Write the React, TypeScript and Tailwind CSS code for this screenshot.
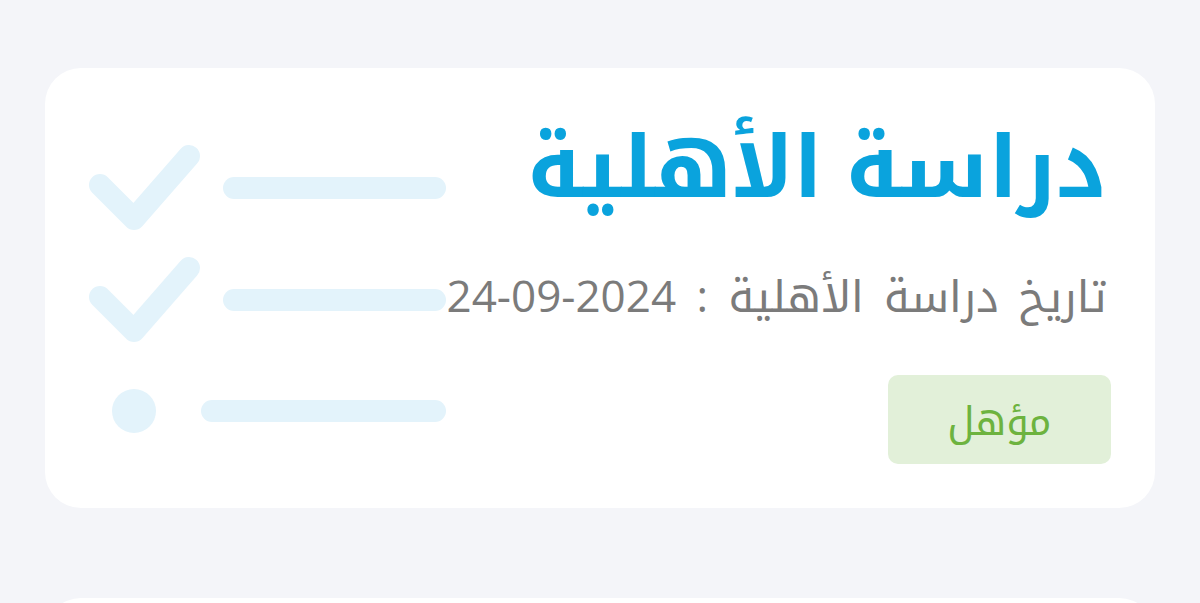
import React from "react"

const arabicFont = {
  fontFamily: '"Open Sans", "Noto Kufi Arabic", "Noto Sans Arabic", "DejaVu Sans", sans-serif',
}

function ChecklistArt() {
  return (
    <svg
      className="absolute left-0 top-0 pointer-events-none"
      width="420"
      height="400"
      viewBox="0 0 420 400"
      fill="none"
    >
      <g stroke="#e3f3fb" strokeWidth="22" strokeLinecap="round" strokeLinejoin="round">
        <path d="M55 117 L89 151 L144 88" />
        <path d="M55 229 L89 263 L144 200" />
        <line x1="189" y1="120" x2="390" y2="120" />
        <line x1="189" y1="232" x2="390" y2="232" />
        <line x1="167" y1="343" x2="390" y2="343" />
      </g>
      <circle cx="89" cy="343" r="22" fill="#e3f3fb" />
    </svg>
  )
}

function EligibilityCard() {
  return (
    <div className="relative h-[440px] rounded-[36px] bg-white overflow-hidden">
      <ChecklistArt />
      <div dir="rtl" className="relative flex flex-col items-start pr-[48px] pt-[36px]" style={arabicFont}>
        <h1 className="text-[86px] leading-[120px] font-bold text-[#0aa3dd]">دراسة الأهلية</h1>
        <p className="mt-[41px] text-[44px] leading-[60px] text-[#7b7b7b] [word-spacing:9px]">
          تاريخ دراسة الأهلية : <span dir="ltr">24-09-2024</span>
        </p>
        <div className="mt-[50px] -mr-[4px] flex h-[89px] w-[223px] items-center justify-center rounded-[10px] bg-[#e2f0d9]">
          <span className="text-[40px] text-[#6db33f]">مؤهل</span>
        </div>
      </div>
    </div>
  )
}

export default function App() {
  return (
    <div className="min-h-[603px] h-[603px] overflow-hidden bg-[#f4f5f9] px-[45px] pt-[68px]">
      <div className="flex flex-col gap-[90px]">
        <EligibilityCard />
        <div className="h-[440px] rounded-[36px] bg-white" />
      </div>
    </div>
  )
}
